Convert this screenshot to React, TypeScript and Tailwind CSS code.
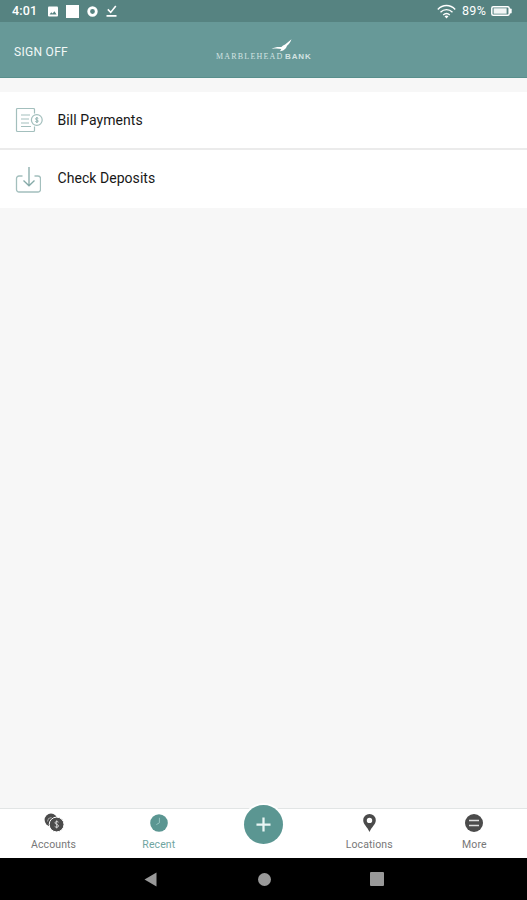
import type { ReactNode } from 'react'

interface TabProps {
	label: string
	active?: boolean
	children: ReactNode
}

const StatusBar = () => (
	<div className="flex h-[22px] items-center bg-[#568381] pl-[12px] pr-[15px] text-white">
		<span className="w-[36px] text-[12.5px] leading-none font-medium tracking-[0.2px]">4:01</span>
		<svg className="h-[11px] w-[10px]" viewBox="0 0 10 11">
			<rect y="0.5" width="10" height="10" rx="1" fill="#fff" />
			<path d="M1.5 8.5l1.8-2.3 1.3 1.4 1.8-2.3 2.2 3.2z" fill="#568381" />
		</svg>
		<div className="ml-[8px] size-[13px] bg-white" />
		<svg className="ml-[8px] size-[11px]" viewBox="0 0 11 11">
			<circle cx="5.5" cy="5.5" r="3.8" fill="none" stroke="#fff" strokeWidth="2.8" />
		</svg>
		<svg className="ml-[8px] h-[12px] w-[12px]" viewBox="0 0 12 12" fill="none" stroke="#fff" strokeWidth="1.6">
			<path d="M1.8 4.4l2.9 3L9.8 1M0.5 10.9h10" />
		</svg>
		<svg className="ml-auto h-[15px] w-[19px]" viewBox="0 0 19 15" fill="none" stroke="#fff" strokeWidth="1.4">
			<path d="M0.8 5.4C5.8 0.2 13.2 0.2 18.2 5.4M3.5 8.2c3.5-3.4 8.5-3.4 12 0M6.2 10.9c2-1.8 4.6-1.8 6.6 0" />
			<path d="M7.5 12.2c1.2-.9 2.8-.9 4 0l-2 2.3z" fill="#fff" stroke="none" />
		</svg>
		<span className="ml-[6px] w-[29px] text-[12.5px] leading-none tracking-[0.3px]">89%</span>
		<svg className="h-[10px] w-[21px]" viewBox="0 0 21 10">
			<rect x="0.8" y="0.8" width="17.4" height="8.4" rx="1.5" fill="none" stroke="#fff" strokeWidth="1.5" />
			<rect x="2.6" y="2.3" width="13" height="5.4" fill="#f1f5f5" />
			<rect x="18.5" y="2.5" width="2.2" height="5" rx="1" fill="#fff" />
		</svg>
	</div>
)

const Logo = () => (
	<div className="flex w-[98px] flex-col pt-px">
		<svg className="ml-[55px] h-[13px] w-[22px]" viewBox="0 0 22 13">
			<path d="M0.5 9.9C4 8.1 7 7.6 10.4 8.1c1-1.3 2.300-2 3.700-2.600L20.500.3c-1 2.900-2.500 4.900-4.500 6.500-.6 2.200-1.900 3.700-3.900 4.700l-3.100.8 1.300-2.200C7 9.300 4 9.500.5 9.900z" fill="#fff" />
		</svg>
		<div className="flex h-[9px] items-center text-[#d3e3e2]">
			<span className="w-[69px] font-['Liberation_Serif',serif] text-[8px] leading-none tracking-[1.2px]">MARBLEHEAD</span>
			<span className="font-['Liberation_Sans',sans-serif] text-[8px] leading-none font-bold tracking-[0.9px]">BANK</span>
		</div>
	</div>
)

const ActionRow = ({ label, children }: { label: string; children: ReactNode }) => (
	<div className="flex h-[58px] items-center bg-white pl-[15px] text-[14px] text-[#171717]">
		<div className="w-[42.500px]">{children}</div>
		<span className="pb-px tracking-[0.05px]">{label}</span>
	</div>
)

const Tab = ({ label, active, children }: TabProps) => (
	<div className={`flex flex-col items-center pt-[4px] ${active ? 'text-[#5b9692]' : 'text-[#4b4b4b]'}`}>
		<div className="flex h-[20px] items-center">{children}</div>
		<span className={`mt-[5px] text-[10.500px] leading-[14px] tracking-[0.1px] ${active ? 'text-[#6fa5a1]' : 'text-[#777]'}`}>{label}</span>
	</div>
)

const TabBar = () => (
	<div className="grid h-[50px] grid-cols-5 border-t border-[#e2e5e5] bg-white pl-px">
		<Tab label="Accounts">
			<svg className="size-[20px]" viewBox="0 0 20 20">
				<circle cx="7" cy="7" r="6.4" fill="currentColor" />
				<path d="M3.5 8.5a4 4 0 0 1 4-4" fill="none" stroke="#aaa" />
				<circle cx="12.6" cy="11.5" r="7.4" fill="currentColor" stroke="#fff" strokeWidth="1" />
				<path d="M14.500 9.200c-1-1.100-3.500-.9-3.500.7 0 1.800 3.500 1.200 3.500 3 0 1.700-2.700 1.800-3.800.5M12.700 7.400v8" fill="none" stroke="#ddd" strokeWidth="0.9" />
			</svg>
		</Tab>
		<Tab label="Recent" active>
			<svg className="size-[18px]" viewBox="0 0 18 18">
				<circle cx="9" cy="9" r="8.8" fill="currentColor" />
				<path d="M9.4 3.8v5l-3 1.8" fill="none" stroke="#9dcbc6" strokeWidth="0.9" />
			</svg>
		</Tab>
		<div className="flex justify-center">
			<div className="relative -top-[4px] flex size-[39px] items-center justify-center rounded-full bg-[#5b9692] ring-2 ring-white">
				<svg className="size-[15px]" viewBox="0 0 16 16" stroke="#e9f5f4" strokeWidth="2.4">
					<path d="M8 0.5v15M0.5 8h15" />
				</svg>
			</div>
		</div>
		<Tab label="Locations">
			<svg className="h-[18px] w-[13px]" viewBox="0 0 13 18">
				<path fillRule="evenodd" d="M6.5 0A6.3 6.3 0 0 0 .2 6.3C.2 10.5 4.5 13 6.5 18c2-5 6.3-7.5 6.3-11.7A6.3 6.3 0 0 0 6.5 0zm0 3.7a2.7 2.7 0 1 1 0 5.4 2.7 2.7 0 0 1 0-5.4z" fill="currentColor" />
			</svg>
		</Tab>
		<Tab label="More">
			<svg className="size-[18px]" viewBox="0 0 18 18">
				<circle cx="9" cy="9" r="9" fill="currentColor" />
				<path d="M4 6.5h10M4 11.5h10" stroke="#ddd" strokeWidth="1.3" />
			</svg>
		</Tab>
	</div>
)

const SystemNav = () => (
	<div className="flex h-[42px] items-center bg-black pl-[144px] text-[#999]">
		<svg className="h-[15px] w-[13px]" viewBox="0 0 13 15">
			<path d="M12.5 0.5v14L0.5 7.5z" fill="currentColor" />
		</svg>
		<div className="ml-[101px] size-[13px] rounded-full bg-[#999]" />
		<div className="ml-[99px] size-[14px] rounded-[1px] bg-[#999]" />
	</div>
)

export default function App() {
	return (
		<div className="flex h-[900px] w-[527px] flex-col overflow-hidden bg-[#f7f7f7] font-['Roboto',sans-serif]">
			<StatusBar />
			<header className="grid h-[56px] grid-cols-[216px_1fr] items-center border-b border-[#588f8c] bg-[#679998]">
				<span className="pl-[14px] pt-[4px] text-[12px] tracking-[0.3px] text-[#f2f8f7]">SIGN OFF</span>
				<Logo />
			</header>
			<main className="flex-1 pt-[14px]">
				<ActionRow label="Bill Payments">
					<svg className="h-[26px] w-[28px] -translate-y-px" viewBox="0 0 28 26" fill="none" stroke="#a3bfbd" strokeWidth="1.2">
						<path d="M19.500 6.500V2.500a1 1 0 0 0-1-1H2.500a1 1 0 0 0-1 1v21a1 1 0 0 0 1 1h16a1 1 0 0 0 1-1v-4M6 8h9M6 12h8M6 16h8M6 19.500h10" />
						<circle cx="21.8" cy="13" r="5.4" />
						<path d="M23.3 11.500c-.8-.9-2.800-.7-2.800.4 0 1.300 2.800.9 2.800 2.200 0 1.200-2.200 1.300-3 .3M21.900 10v6" stroke="#86aaa8" strokeWidth="0.9" />
					</svg>
				</ActionRow>
				<div className="-mt-[2px] border-t-2 border-[#ebebeb]">
					<ActionRow label="Check Deposits">
						<svg className="h-[28px] w-[26px] translate-y-px" viewBox="0 0 26 28" fill="none" stroke="#a3bfbd" strokeWidth="1.3">
							<path d="M7.5 10H4a2.5 2.5 0 0 0-2.5 2.5v11A2.5 2.5 0 0 0 4 26h19a2.5 2.5 0 0 0 2.5-2.5v-11A2.5 2.5 0 0 0 23 10h-3.5" />
							<path d="M14 1v18.5M8.5 14.5l5.5 5.3 5.5-5.3" stroke="#86aaa8" />
						</svg>
					</ActionRow>
				</div>
			</main>
			<TabBar />
			<SystemNav />
		</div>
	)
}
